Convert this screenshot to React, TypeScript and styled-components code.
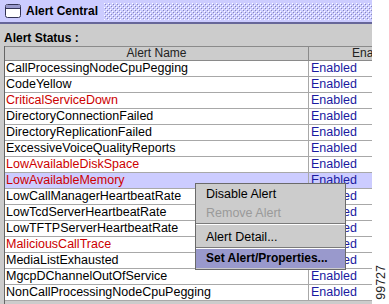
import React from "react";
import styled, { createGlobalStyle } from "styled-components";

const Global = createGlobalStyle`
  html, body { margin: 0; padding: 0; background: #ffffff; }
  body { font-family: "Liberation Sans", Arial, sans-serif; }
`;

const Page = styled.div`
  width: 389px;
  height: 304px;
  display: flex;
  overflow: hidden;
`;

const Frame = styled.div`
  width: 372px;
  height: 304px;
  background: #cccccc;
  display: flex;
  flex-direction: column;
  overflow: hidden;
`;

const TitleBar = styled.div`
  height: 22px;
  flex: none;
  background: #ccccff;
  border-bottom: 2px solid #666699;
  display: flex;
  align-items: center;
  padding-left: 5px;
`;

const TitleText = styled.div`
  font: bold 12px "Liberation Sans", Arial, sans-serif;
  color: #000;
  margin-left: 5px;
  white-space: nowrap;
`;

const BumpsSvg = styled.svg`
  flex: 1;
  height: 17px;
  margin-left: 6px;
  display: block;
`;

const StatusLabel = styled.div`
  height: 22px;
  flex: none;
  display: flex;
  align-items: flex-end;
  padding: 0 0 1px 4px;
  box-sizing: border-box;
  font: bold 12px/13px "Liberation Sans", Arial, sans-serif;
  color: #000;
`;

const Table = styled.div`
  position: relative;
  margin-left: 4px;
  border-left: 1px solid #666666;
  flex: 1;
  display: flex;
  flex-direction: column;
`;

const Grid = styled.div`
  display: grid;
  grid-template-columns: 304px 130px;
  flex: none;
`;

const HeadCell = styled.div<{ $last?: boolean }>`
  box-sizing: border-box;
  height: 15px;
  border-top: 1px solid #8a8a8a;
  border-bottom: 1px solid #8a8a8a;
  border-right: ${(p) => (p.$last ? "none" : "1px solid #8a8a8a")};
  background: #cccccc;
  text-align: center;
  font: 12px/13px "Liberation Sans", Arial, sans-serif;
  color: #222;
  white-space: nowrap;
  overflow: hidden;
`;

const Cell = styled.div<{ $sel?: boolean; $color: string; $first?: boolean }>`
  box-sizing: border-box;
  height: 16px;
  border-bottom: 1px solid #a8a8a8;
  border-right: ${(p) => (p.$first ? "1px solid #a8a8a8" : "none")};
  background: ${(p) => (p.$sel ? "#ccccff" : "#ffffff")};
  color: ${(p) => p.$color};
  font: 12.5px/15px "Liberation Sans", Arial, sans-serif;
  padding-left: ${(p) => (p.$first ? "1px" : "2px")};
  white-space: nowrap;
  overflow: hidden;
`;

const Menu = styled.div`
  position: absolute;
  left: 190px;
  top: 137px;
  width: 151px;
  box-sizing: border-box;
  background: #cccccc;
  border: 1px solid #6a6a6a;
  padding: 1px 0;
  display: flex;
  flex-direction: column;
`;

const MenuItem = styled.div<{ $disabled?: boolean; $active?: boolean }>`
  height: 19px;
  padding-left: 10px;
  font: ${(p) => (p.$active ? "bold 12px" : "normal 12.5px")}/19px "Liberation Sans", Arial, sans-serif;
  color: ${(p) => (p.$disabled ? "#9a9a9a" : "#000")};
  background: ${(p) => (p.$active ? "#9999cc" : "transparent")};
  white-space: nowrap;
`;

const Separator = styled.div<{ $after: number }>`
  height: 0;
  border-top: 1px solid #7a7a7a;
  border-bottom: 1px solid #ffffff;
  margin-bottom: ${(p) => p.$after}px;
`;

const SideCol = styled.div`
  flex: 1;
  display: flex;
  align-items: flex-end;
  justify-content: center;
  padding-bottom: 4px;
`;

const FigLabel = styled.div`
  writing-mode: vertical-rl;
  transform: rotate(180deg);
  font: 12.5px/12px "Liberation Sans", Arial, sans-serif;
  color: #222;
`;

const FrameIcon = () => (
  <svg width="16" height="14" viewBox="0 0 16 14">
    <rect x="0.5" y="0.5" width="15" height="13" rx="2" fill="#ffffff" stroke="#333355" />
    <rect x="1" y="1" width="14" height="3" fill="#9999cc" />
    <line x1="1" y1="4.5" x2="15" y2="4.5" stroke="#333355" />
  </svg>
);

const Bumps = () => (
  <BumpsSvg preserveAspectRatio="none">
    <defs>
      <pattern id="bumps" width="4" height="4" patternUnits="userSpaceOnUse">
        <rect x="0" y="0" width="1" height="1" fill="#ffffff" />
        <rect x="2" y="2" width="1" height="1" fill="#ffffff" />
        <rect x="1" y="1" width="1" height="1" fill="#8888bb" />
        <rect x="3" y="3" width="1" height="1" fill="#8888bb" />
      </pattern>
    </defs>
    <rect x="0" y="0" width="100%" height="100%" fill="url(#bumps)" />
  </BumpsSvg>
);

const RED = "#cc0000";
const BLACK = "#000000";
const BLUE = "#1a1aa0";

const rows: { name: string; red?: boolean; sel?: boolean }[] = [
  { name: "CallProcessingNodeCpuPegging" },
  { name: "CodeYellow" },
  { name: "CriticalServiceDown", red: true },
  { name: "DirectoryConnectionFailed" },
  { name: "DirectoryReplicationFailed" },
  { name: "ExcessiveVoiceQualityReports" },
  { name: "LowAvailableDiskSpace", red: true },
  { name: "LowAvailableMemory", red: true, sel: true },
  { name: "LowCallManagerHeartbeatRate" },
  { name: "LowTcdServerHeartbeatRate" },
  { name: "LowTFTPServerHeartbeatRate" },
  { name: "MaliciousCallTrace", red: true },
  { name: "MediaListExhausted" },
  { name: "MgcpDChannelOutOfService" },
  { name: "NonCallProcessingNodeCpuPegging" },
];

export default function App() {
  return (
    <Page>
      <Global />
      <Frame>
        <TitleBar>
          <FrameIcon />
          <TitleText>Alert Central</TitleText>
          <Bumps />
        </TitleBar>
        <StatusLabel>Alert Status :</StatusLabel>
        <Table>
          <Grid>
            <HeadCell>Alert Name</HeadCell>
            <HeadCell $last>Enabled</HeadCell>
          </Grid>
          {rows.map((r) => (
            <Grid key={r.name}>
              <Cell $first $sel={r.sel} $color={r.red ? RED : BLACK}>
                {r.name}
              </Cell>
              <Cell $sel={r.sel} $color={BLUE}>
                Enabled
              </Cell>
            </Grid>
          ))}
          <Menu>
            <MenuItem>Disable Alert</MenuItem>
            <MenuItem $disabled>Remove Alert</MenuItem>
            <Separator $after={3} />
            <MenuItem>Alert Detail...</MenuItem>
            <Separator $after={0} />
            <MenuItem $active>Set Alert/Properties...</MenuItem>
          </Menu>
        </Table>
      </Frame>
      <SideCol>
        <FigLabel>99727</FigLabel>
      </SideCol>
    </Page>
  );
}
